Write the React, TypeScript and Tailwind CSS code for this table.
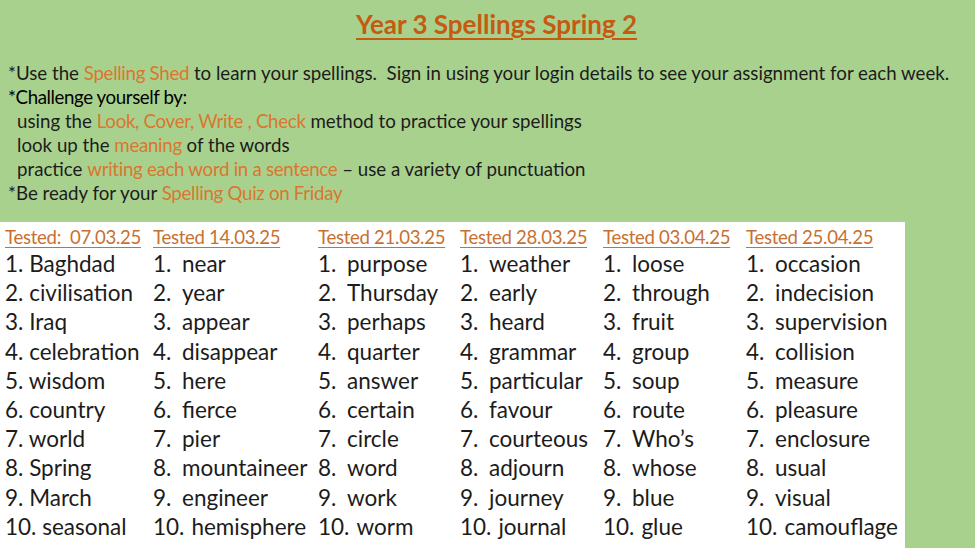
import React from "react";

const font = { fontFamily: "Lato, 'Open Sans', sans-serif" };

const columns = [
  {
    title: "Tested:  07.03.25",
    width: "w-[148px]",
    tight: true,
    words: ["Baghdad", "civilisation", "Iraq", "celebration", "wisdom", "country", "world", "Spring", "March", "seasonal"],
  },
  {
    title: "Tested 14.03.25",
    width: "w-[165px]",
    words: ["near", "year", "appear", "disappear", "here", "fierce", "pier", "mountaineer", "engineer", "hemisphere"],
  },
  {
    title: "Tested 21.03.25",
    width: "w-[142px]",
    words: ["purpose", "Thursday", "perhaps", "quarter", "answer", "certain", "circle", "word", "work", "worm"],
  },
  {
    title: "Tested 28.03.25",
    width: "w-[143px]",
    words: ["weather", "early", "heard", "grammar", "particular", "favour", "courteous", "adjourn", "journey", "journal"],
  },
  {
    title: "Tested 03.04.25",
    width: "w-[143px]",
    words: ["loose", "through", "fruit", "group", "soup", "route", "Who’s", "whose", "blue", "glue"],
  },
  {
    title: "Tested 25.04.25",
    width: "w-[159px]",
    words: ["occasion", "indecision", "supervision", "collision", "measure", "pleasure", "enclosure", "usual", "visual", "camouflage"],
  },
];

function Hi({ children }: { children: React.ReactNode }) {
  return <span className="text-[#d9772f] tracking-[-0.3px]">{children}</span>;
}

export default function App() {
  return (
    <div className="w-[975px] h-[548px] bg-[#a9d18e] flex flex-col overflow-hidden text-[#1c1c1c]" style={font}>
      {/* Title */}
      <div className="pt-[8px] pl-[18px] flex justify-center">
        <h1 className="text-[26px] leading-[32px] font-bold text-[#c55a11] underline underline-offset-[4px] decoration-[2px]">
          Year 3 Spellings Spring 2
        </h1>
      </div>

      {/* Instructions */}
      <div className="mt-[21px] pl-[8px] text-[18.7px] leading-[24px]">
        <p>
          *Use the <Hi>Spelling Shed</Hi> to learn your spellings.&nbsp; Sign in using your login details to see your assignment for each week.
        </p>
        <p className="text-black tracking-[-0.4px]">*Challenge yourself by:</p>
        <p className="pl-[9px]">
          using the <Hi>Look, Cover, Write , Check</Hi> method to practice your spellings
        </p>
        <p className="pl-[9px]">
          look up the <Hi>meaning</Hi> of the words
        </p>
        <p className="pl-[9px]">
          practice <Hi>writing each word in a sentence</Hi> – use a variety of punctuation
        </p>
        <p>
          *Be ready for your <Hi>Spelling Quiz on Friday</Hi>
        </p>
      </div>

      {/* Word lists */}
      <div className="mt-auto w-[905px] h-[326px] bg-white flex pl-[5px] pt-[4px]">
        {columns.map((col) => (
          <div key={col.title} className={`${col.width} shrink-0 flex flex-col`}>
            <div className="text-[18.6px] leading-[23px] text-[#c8702f] underline underline-offset-[3px] decoration-[1px] whitespace-pre tracking-[-0.3px]">
              {col.title}
            </div>
            <ol>
              {col.words.map((w, i) => (
                <li key={w} className="text-[22.5px] leading-[29.2px] whitespace-nowrap flex">
                  {col.tight ? (
                    <span>
                      {i + 1}. {w}
                    </span>
                  ) : (
                    <>
                      <span className="min-w-[29px] pr-[7px] shrink-0">{i + 1}.</span>
                      <span>{w}</span>
                    </>
                  )}
                </li>
              ))}
            </ol>
          </div>
        ))}
      </div>
    </div>
  );
}
